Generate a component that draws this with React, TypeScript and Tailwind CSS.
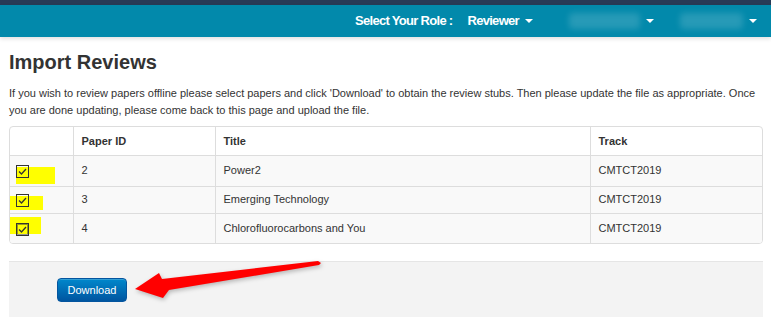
import React from 'react';

const papers = [
  { id: '2', title: 'Power2', track: 'CMTCT2019', row: 'h-[31px]', mark: 'w-[39px] left-[6px] top-[11px] h-[17px]' },
  { id: '3', title: 'Emerging Technology', track: 'CMTCT2019', row: 'h-[27px]', mark: 'w-[33px] left-0 top-[9px] h-[14px]' },
  { id: '4', title: 'Chlorofluorocarbons and You', track: 'CMTCT2019', row: 'h-[30px]', mark: 'w-[31px] left-0 top-[3px] h-[17px]' },
];

const Caret = () => (
  <span className="ml-[6px] inline-block w-0 h-0 border-l-[4px] border-r-[4px] border-t-[4px] border-l-transparent border-r-transparent border-t-white align-middle" />
);

// checked box, drawn as in the screenshot (old windows style)
const CheckBox = ({ focused }: { focused?: boolean }) => (
  <svg width="13" height="13" viewBox="0 0 13 13" className="relative">
    <rect x="0.5" y="0.5" width="12" height="12" fill="none" stroke="#333" />
    {focused && <rect x="1.5" y="1.5" width="10" height="10" fill="none" stroke="#333" strokeDasharray="1 1" />}
    <path d="M3 6.5 L5.5 9 L10 4" fill="none" stroke="#333" strokeWidth="1.3" />
  </svg>
);

export default function App() {
  return (
    <div className="relative w-[771px] h-[325px] bg-white overflow-hidden text-[#333]" style={{ fontFamily: '"Liberation Sans", Arial, sans-serif' }}>
      {/* top bar */}
      <div className="h-[5px] bg-[#283a56]" />
      <div className="h-[32px] bg-[#0289ab] shadow-[0_2px_4px_rgba(0,0,0,0.12)] flex items-center text-white text-[13px] font-bold tracking-[-0.7px] whitespace-nowrap">
        <span className="ml-[355px]">Select Your Role :</span>
        <span className="ml-[15px] flex items-center">Reviewer<Caret /></span>
        <span className="ml-[36px] flex items-center">
          <span className="w-[71px] h-[16px] bg-white/15 blur-[3px] rounded" />
          <Caret />
        </span>
        <span className="ml-[26px] flex items-center">
          <span className="w-[63px] h-[16px] bg-white/15 blur-[3px] rounded" />
          <Caret />
        </span>
      </div>

      <div className="px-[9px] w-[772px]">
        <h1 className="mt-[12px] text-[20px] leading-[26px] font-bold">Import Reviews</h1>
        <p className="mt-[10px] text-[11px] leading-[17px] pr-[6px]">
          If you wish to review papers offline please select papers and click 'Download' to obtain the review stubs. Then please update the file as appropriate. Once you are done updating, please come back to this page and upload the file.
        </p>

        <div className="mt-[7px] w-[754px] border border-[#ddd] rounded-[4px] overflow-hidden">
          <table className="w-full border-collapse text-[11px]">
            <thead>
              <tr className="h-[28px]">
                <th className="w-[63px] border-r border-[#ddd]" />
                <th className="w-[142px] text-left font-bold px-[8px] border-r border-[#ddd]">Paper ID</th>
                <th className="w-[375px] text-left font-bold px-[8px] border-r border-[#ddd]">Title</th>
                <th className="text-left font-bold px-[8px]">Track</th>
              </tr>
            </thead>
            <tbody>
              {papers.map((p, i) => (
                <tr key={p.id} className={`bg-[#f9f9f9] border-t border-[#ddd] ${p.row}`}>
                  <td className="relative border-r border-[#ddd] px-[6px]">
                    <span className={`absolute bg-[#ffff00] ${p.mark}`} />
                    <span className="relative flex pt-[2px]">
                      <CheckBox focused={i === 2} />
                    </span>
                  </td>
                  <td className="px-[8px] border-r border-[#ddd]">{p.id}</td>
                  <td className="px-[8px] border-r border-[#ddd]">{p.title}</td>
                  <td className="px-[8px]">{p.track}</td>
                </tr>
              ))}
            </tbody>
          </table>
        </div>

        <div className="mt-[17px] w-[754px] h-[56px] bg-[#f3f3f3] border-t border-[#e5e5e5] pt-[15px] pl-[48px]">
          <button className="w-[70px] h-[24px] rounded-[4px] border border-[#04559f] bg-gradient-to-b from-[#0088cc] to-[#0055a0] text-white text-[11px] shadow-[inset_0_1px_0_rgba(255,255,255,0.2)]">
            Download
          </button>
        </div>
      </div>

      {/* red annotation arrow */}
      <svg className="absolute left-0 top-0 pointer-events-none drop-shadow-[1px_2px_2px_rgba(0,0,0,0.25)]" width="771" height="325">
        <polygon points="135,289 159,273 162,279 318,261 321,263 319,265 169,290 163,298" fill="#f00" />
      </svg>
    </div>
  );
}
